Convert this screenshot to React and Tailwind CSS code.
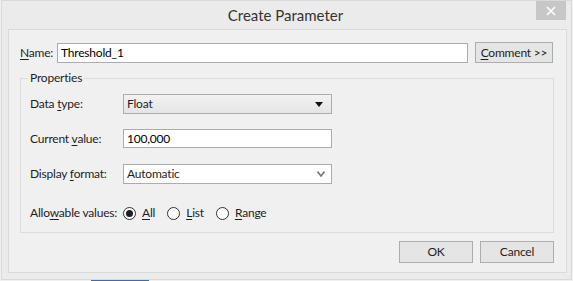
import React, { useState } from 'react';

const font = { fontFamily: 'Lato, "Noto Sans", "Open Sans", sans-serif' };

function Key({ children }) {
  return <span className="underline underline-offset-2">{children}</span>;
}

function Radio({ checked, onClick, children }) {
  return (
    <button type="button" onClick={onClick} className="flex items-center gap-[6px] whitespace-nowrap text-[12px] text-[#1e1e1e]">
      <span className="flex h-[13px] w-[13px] items-center justify-center rounded-full border border-[#333333] bg-white">
        {checked ? <span className="h-[7px] w-[7px] rounded-full bg-[#1e1e1e]" /> : null}
      </span>
      <span>{children}</span>
    </button>
  );
}

export default function App() {
  const [name, setName] = useState('Threshold_1');
  const [value, setValue] = useState('100,000');
  const [allow, setAllow] = useState('all');

  return (
    <div className="h-[281px] w-[573px] overflow-hidden bg-[#f0f0f0] tracking-[-0.2px]" style={font}>
      <div className="ml-[1px] flex h-[280px] w-[571px] flex-col border border-[#d9d9d9] bg-[#ebebeb]">
        {/* title bar */}
        <div className="flex h-[28px] shrink-0 items-start">
          <div className="flex-1 pl-[33px] pt-[5px] text-center text-[15px] leading-[18px] tracking-normal text-[#333333]">Create Parameter</div>
          <button type="button" className="mr-[5px] flex h-[19px] w-[30px] items-center justify-center bg-[#c7c7c7]">
            <svg width="10" height="10" viewBox="0 0 10 10">
              <path d="M1 1 L9 9 M9 1 L1 9" stroke="#ffffff" strokeWidth="1.6" />
            </svg>
          </button>
        </div>

        {/* client area */}
        <div className="ml-[6px] h-[244px] w-[559px] border border-[#dadada] bg-[#f0f0f0] px-[11px] pt-[12px]">
          <div className="flex h-[21px] items-center">
            <label className="w-[37px] whitespace-nowrap text-[12px] text-[#1e1e1e]"><Key>N</Key>ame:</label>
            <input
              value={name}
              onChange={(e) => setName(e.target.value)}
              className="h-[20px] w-[411px] border border-[#acacac] bg-white px-[3px] text-[12px] text-black outline-none"
            />
            <button type="button" className="ml-[7px] h-[21px] w-[78px] whitespace-nowrap border border-[#adadad] bg-[#e5e5e5] text-[12px] text-[#1e1e1e]">
              <Key>C</Key>omment &gt;&gt;
            </button>
          </div>

          {/* Properties group */}
          <div className="mt-[15px] h-[155px] w-[534px] border border-[#dcdcdc] px-[9px]">
            <div className="-mt-[8px] ml-[-2px] w-fit bg-[#f0f0f0] px-[2px] text-[12px] leading-[14px] text-[#1e1e1e]">Properties</div>

            <div className="mt-[9px] flex h-[20px] items-center">
              <span className="w-[93px] whitespace-nowrap text-[12px] text-[#1e1e1e]">Data <Key>t</Key>ype:</span>
              <button type="button" className="flex h-[20px] w-[209px] items-center justify-between border border-[#acacac] bg-gradient-to-b from-[#f2f2f2] to-[#e5e5e5] pl-[3px] pr-[8px] text-[12px] text-[#1e1e1e]">
                <span>Float</span>
                <svg width="8" height="5" viewBox="0 0 8 5">
                  <path d="M0 0 H8 L4 5 Z" fill="#111111" />
                </svg>
              </button>
            </div>

            <div className="mt-[15px] flex h-[19px] items-center">
              <span className="w-[93px] whitespace-nowrap text-[12px] text-[#1e1e1e]">Current <Key>v</Key>alue:</span>
              <input
                value={value}
                onChange={(e) => setValue(e.target.value)}
                className="h-[19px] w-[209px] border border-[#acacac] bg-white px-[3px] text-[12px] text-black outline-none"
              />
            </div>

            <div className="mt-[16px] flex h-[20px] items-center">
              <span className="w-[93px] whitespace-nowrap text-[12px] text-[#1e1e1e]">Display <Key>f</Key>ormat:</span>
              <button type="button" className="flex h-[20px] w-[209px] items-center justify-between border border-[#acacac] bg-white pl-[3px] pr-[6px] text-[12px] text-[#1e1e1e]">
                <span>Automatic</span>
                <svg width="8" height="6" viewBox="0 0 8 6">
                  <path d="M0.5 0.5 L4 5 L7.5 0.5" fill="none" stroke="#777777" strokeWidth="1.6" />
                </svg>
              </button>
            </div>

            <div className="mt-[19px] flex h-[20px] items-center">
              <span className="w-[93px] whitespace-nowrap text-[12px] text-[#1e1e1e]">Allo<Key>w</Key>able values:</span>
              <div className="flex items-center gap-[12px]">
                <Radio checked={allow === 'all'} onClick={() => setAllow('all')}><Key>A</Key>ll</Radio>
                <Radio checked={allow === 'list'} onClick={() => setAllow('list')}><Key>L</Key>ist</Radio>
                <Radio checked={allow === 'range'} onClick={() => setAllow('range')}><Key>R</Key>ange</Radio>
              </div>
            </div>
          </div>

          <div className="mt-[8px] flex w-[534px] justify-end gap-[7px]">
            <button type="button" className="h-[22px] w-[74px] border border-[#adadad] bg-[#e5e5e5] text-[12px] text-[#1e1e1e]">OK</button>
            <button type="button" className="h-[22px] w-[74px] border border-[#adadad] bg-[#e5e5e5] text-[12px] text-[#1e1e1e]">Cancel</button>
          </div>
        </div>
      </div>
      <div className="flex h-[1px]">
        <div className="ml-[91px] h-[1px] w-[58px] bg-[#3c6ea5]" />
      </div>
    </div>
  );
}
